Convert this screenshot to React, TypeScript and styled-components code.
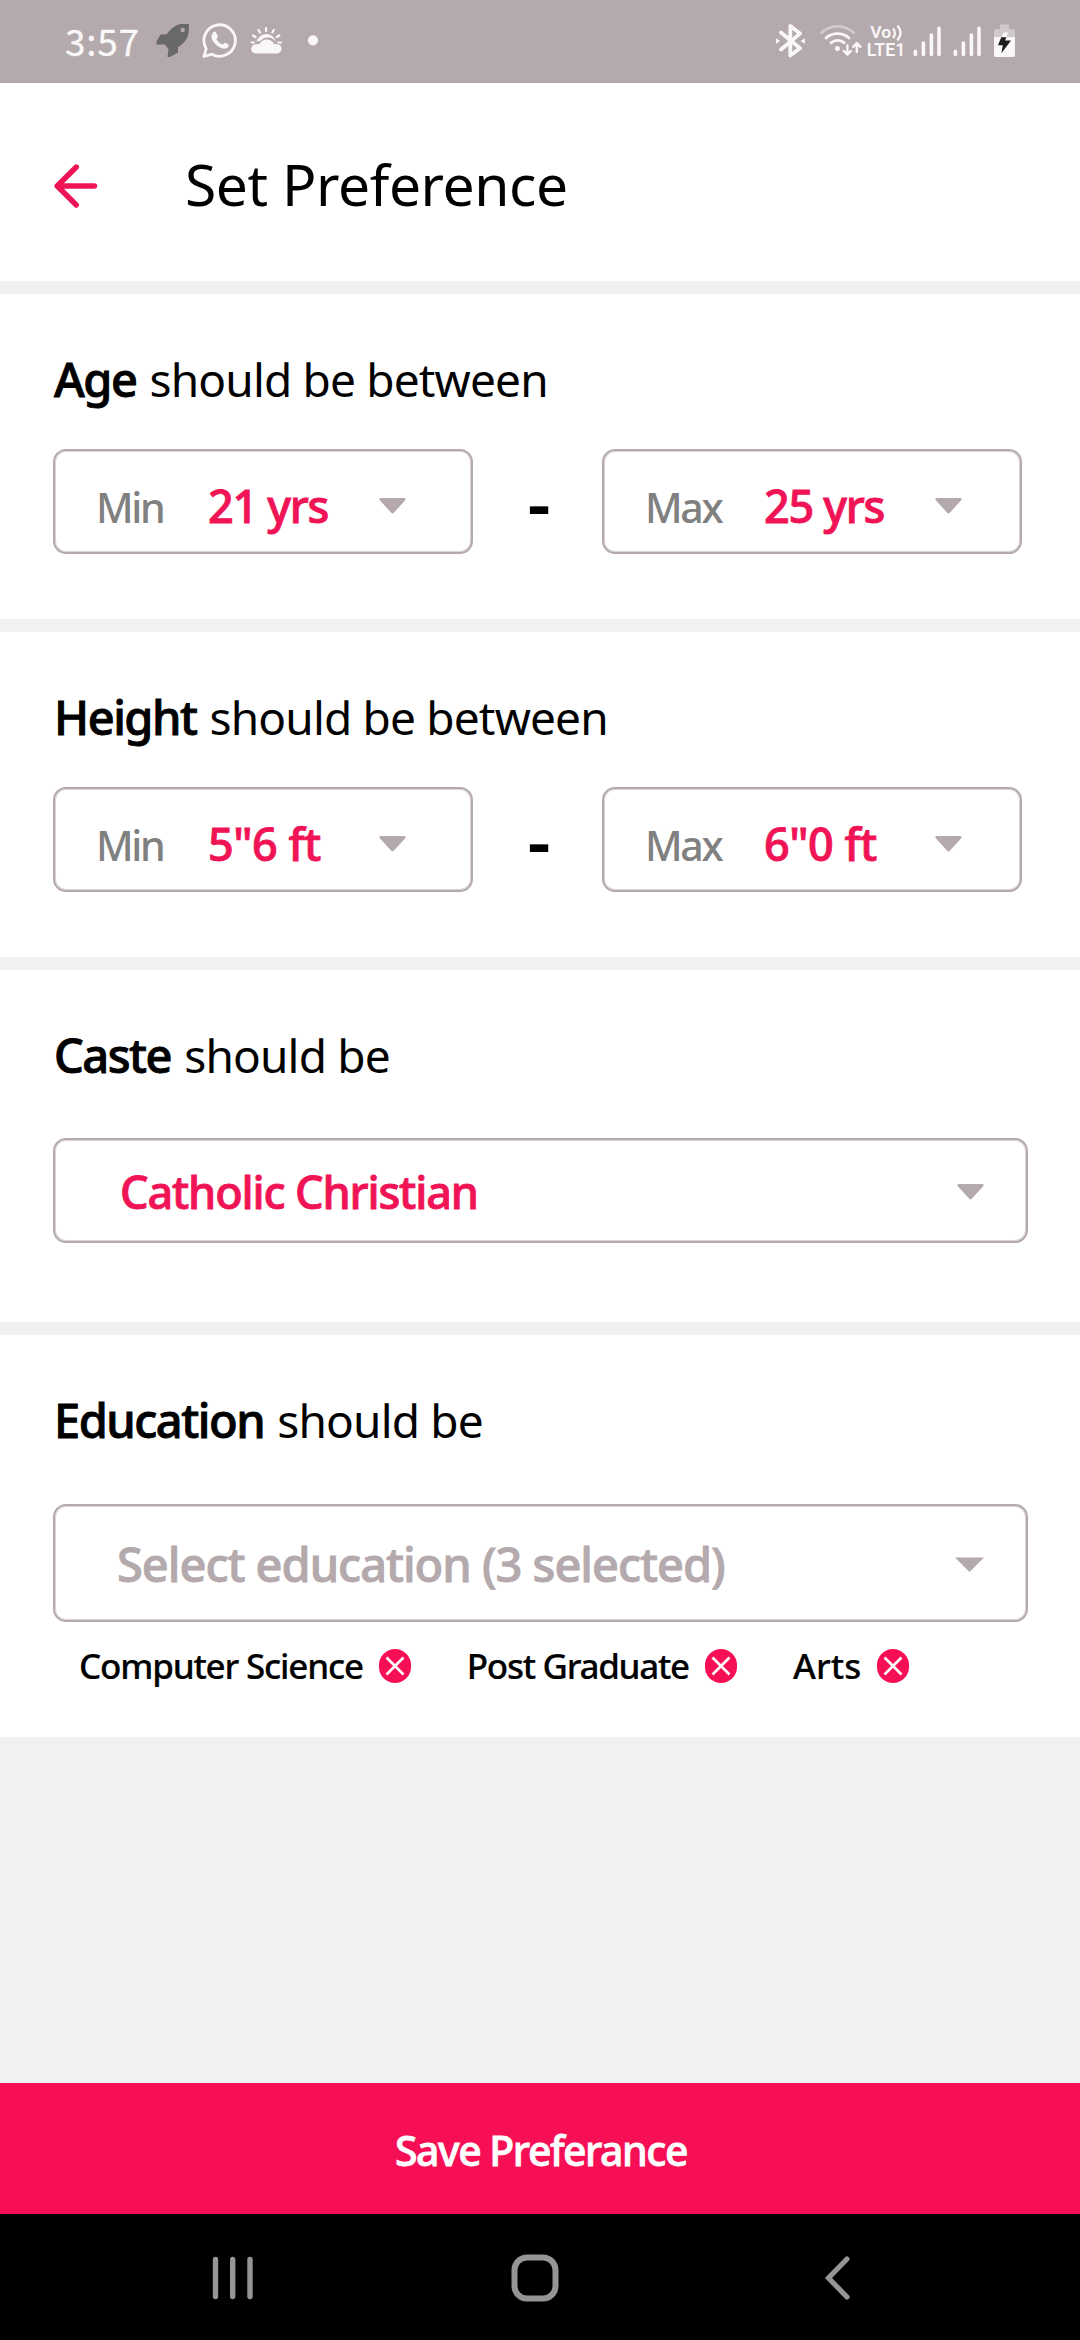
import React from "react";
import styled, { createGlobalStyle } from "styled-components";

const PINK = "#f01456";
const BRAND = "#f70f55";
const MUTED = "#b4a9ac";
const ICON = "#f9f7f8";

const GlobalStyle = createGlobalStyle`
  body { margin: 0; background: #f1f1f1; }
  * { box-sizing: border-box; }
`;

const Screen = styled.div`
  width: 1080px;
  height: 2340px;
  display: flex;
  flex-direction: column;
  background: #f1f1f1;
  color: #000;
  font-family: "Noto Sans", sans-serif;
  overflow: hidden;
`;

/* ---------- status bar ---------- */

const StatusBar = styled.div`
  height: 83px;
  flex: none;
  display: flex;
  align-items: center;
  justify-content: space-between;
  padding: 0 64px 2px 65px;
  background: ${MUTED};
`;

const StatusGroup = styled.div<{ $gap: number }>`
  display: flex;
  align-items: center;
  gap: ${(p) => p.$gap}px;
`;

const Clock = styled.span`
  width: 79px;
  padding-bottom: 2px;
  font-family: "Noto Sans CJK JP", "Noto Sans", sans-serif;
  font-size: 37px;
  line-height: 78px;
  letter-spacing: 0.7px;
  white-space: nowrap;
  color: ${ICON};
  -webkit-text-stroke: 0.3px currentColor;
`;

const Glyph = styled.svg<{ $before?: number }>`
  display: block;
  flex: none;
  margin-left: ${(p) => p.$before ?? 0}px;
`;

/* ---------- header ---------- */

const Header = styled.header`
  height: 198px;
  flex: none;
  display: flex;
  align-items: center;
  padding: 4px 0 0 53px;
  background: #fff;
`;

const BackButton = styled.button`
  display: flex;
  width: 132px;
  margin-top: 4px;
  padding: 0;
  border: 0;
  background: none;
`;

const Title = styled.h1`
  margin: 0;
  font-size: 57px;
  font-weight: 400;
  line-height: 80px;
  letter-spacing: -0.45px;
`;

/* ---------- sections ---------- */

const Section = styled.section<{ $height: number }>`
  height: ${(p) => p.$height}px;
  flex: none;
  margin-top: 13px;
  padding: 55px 52px 0 53px;
  background: #fff;
`;

const Label = styled.h2<{ $gap: number }>`
  margin: 0 0 ${(p) => p.$gap}px;
  padding-left: 1px;
  font-size: 46px;
  font-weight: 400;
  line-height: 60px;
  letter-spacing: -0.83px;
  white-space: nowrap;
`;

const Strong = styled.strong`
  margin-right: 2px;
  font-size: 47px;
  font-weight: 500;
  line-height: 1;
  letter-spacing: -1.5px;
  -webkit-text-stroke: 0.9px currentColor;
`;

const RangeRow = styled.div`
  display: flex;
  align-items: center;
`;

const Dash = styled.span`
  width: 129px;
  height: 105px;
  padding-left: 3px;
  text-align: center;
  font-size: 72px;
  font-weight: 600;
  line-height: 106px;
`;

const Select = styled.div<{ $width: number; $height: number; $pad: string; $spread?: boolean }>`
  width: ${(p) => p.$width}px;
  height: ${(p) => p.$height}px;
  flex: none;
  display: flex;
  align-items: center;
  justify-content: ${(p) => (p.$spread ? "space-between" : "flex-start")};
  padding: ${(p) => p.$pad};
  border: 2px solid ${MUTED};
  border-radius: 13px;
  box-shadow: inset 0 0 0 1px rgba(180, 169, 172, 0.5);
  background: #fff;
`;

const Bound = styled.span<{ $width: number }>`
  width: ${(p) => p.$width}px;
  padding-top: 2px;
  font-size: 41px;
  font-weight: 500;
  line-height: 60px;
  letter-spacing: -2.3px;
  color: #808080;
`;

const Value = styled.span<{ $width?: number; $size: number; $color?: string; $tracking: number }>`
  width: ${(p) => (p.$width ? `${p.$width}px` : "auto")};
  font-size: ${(p) => p.$size}px;
  font-weight: 500;
  line-height: 60px;
  letter-spacing: ${(p) => p.$tracking}px;
  white-space: nowrap;
  color: ${(p) => p.$color ?? PINK};
  -webkit-text-stroke: 0.9px currentColor;
`;

const Chips = styled.div`
  display: flex;
  align-items: center;
  gap: 56px;
  height: 44px;
  margin-top: 22px;
  padding-left: 26px;
`;

const Chip = styled.span<{ $tracking: number }>`
  display: flex;
  align-items: center;
  gap: 16px;
  font-size: 35px;
  font-weight: 500;
  line-height: 44px;
  letter-spacing: ${(p) => p.$tracking}px;
  white-space: nowrap;
  -webkit-text-stroke: 0.2px currentColor;
`;

/* ---------- bottom ---------- */

const SaveButton = styled.button`
  height: 131px;
  flex: none;
  margin-top: auto;
  padding: 3px 0 0 2px;
  border: 0;
  background: ${BRAND};
  color: #fff;
  font-family: inherit;
  font-size: 41px;
  font-weight: 500;
  letter-spacing: -1.5px;
  -webkit-text-stroke: 0.8px currentColor;
`;

const NavBar = styled.nav`
  height: 126px;
  flex: none;
  display: grid;
  grid-template-columns: repeat(3, 302px);
  align-items: center;
  justify-items: center;
  padding: 1px 0 0 82px;
  background: #000;
`;

/* ---------- icons ---------- */

const RoundCaret = () => (
  <Glyph width="27" height="18" viewBox="0 0 27 18">
    <path d="M1.6 1H25.4Q27.4 1.4 26.4 3L15 15.6Q13.5 17.3 12 15.6L0.6 3Q-0.4 1.4 1.6 1Z" fill={MUTED} />
  </Glyph>
);

const SharpCaret = () => (
  <Glyph width="29" height="15" viewBox="0 0 29 15">
    <path d="M0 0.4H29L14.5 15Z" fill={MUTED} />
  </Glyph>
);

const RemoveIcon = () => (
  <Glyph width="32" height="34" viewBox="0 0 32 34">
    <rect width="32" height="34" rx="16" fill={BRAND} />
    <path d="M7.5 8.5L24.5 25.5M24.5 8.5L7.5 25.5" stroke="#fff" strokeWidth="2.6" />
  </Glyph>
);

const Rocket = () => (
  <Glyph width="34" height="34" viewBox="156 24 34 34">
    <path
      d="M189 24L188.6 33Q187.5 41 178 47.5V52.5L170 57H167.5L168.5 49L164.5 44.5H156.5V41.5L160.5 34.5H166.5Q172 26.5 180 24Z"
      fill="#696969"
    />
    <circle cx="182.7" cy="30" r="2.2" fill={MUTED} />
  </Glyph>
);

const WhatsApp = () => (
  <Glyph width="36" height="36" viewBox="202 23 36 36">
    <path d="M204 56.5L206.2 48.6A15.7 15.7 0 1 1 212 54.2Z" fill="none" stroke={ICON} strokeWidth="2.8" strokeLinejoin="round" />
    <path
      d="M213.6 33.2Q215 31.8 216.2 32.8L218.4 37Q218.6 38.2 216.8 40Q219.3 44 223.2 45.6Q225 43.2 226.2 43.6L229.4 45.8Q229 49.6 224.4 49.6Q217.8 48.6 213 41.4Q210.6 36.4 213.6 33.2Z"
      fill={ICON}
      transform="translate(-.5 -.8)"
    />
  </Glyph>
);

const Weather = () => (
  <Glyph width="34" height="34" viewBox="250 24 34 34">
    <g stroke={ICON} strokeWidth="2.2" strokeLinecap="round">
      <path d="M266 28V31M258.5 30L260 32.5M273.8 30L272.3 32.5M253 35.5L255.5 37M279.3 35.5L276.8 37M251.6 42.5H254M278.4 42.5H281" />
    </g>
    <path d="M256.6 41.8A9.8 9.8 0 0 1 275.8 41.8A9.6 9.6 0 0 0 260.4 41A8 8 0 0 0 256.6 41.8Z" fill={ICON} />
    <path d="M255.6 53.4A4.6 4.6 0 0 1 255.8 44.2L259.6 44A8 8 0 0 1 274 44L277 44.2A4.6 4.6 0 0 1 277 53.4Z" fill={ICON} />
  </Glyph>
);

const Dot = () => (
  <Glyph width="34" height="34" viewBox="296 24 34 34">
    <circle cx="313" cy="40.3" r="5.1" fill={ICON} />
  </Glyph>
);

const Bluetooth = () => (
  <Glyph width="30" height="34" viewBox="775 24 30 34">
    <path d="M781 32.5L800 48.3L790.3 55.5V26L800 33.6L781 49.5" fill="none" stroke={ICON} strokeWidth="3.8" strokeLinejoin="round" strokeLinecap="round" />
    <path d="M776 38.2L780.3 41L776 43.8ZM805 38.2L800.5 41L805 43.8Z" fill={ICON} />
  </Glyph>
);

const Wifi = () => (
  <Glyph $before={15} width="42" height="34" viewBox="820 24 42 34">
    <g fill="none" strokeWidth="2.8" strokeLinecap="round">
      <path d="M821.5 32.8A23.5 23.5 0 0 1 853.6 32.8" stroke="#d3cbcd" />
      <path d="M826 38A17.5 17.5 0 0 1 849 38" stroke={ICON} />
      <path d="M831 42.8A10.5 10.5 0 0 1 844.2 42.6" stroke={ICON} />
    </g>
    <circle cx="837.4" cy="48.4" r="2.5" fill={ICON} />
    <path d="M847.4 45.5V53.5M843.8 51L847.4 54.6L851 51M856.8 52V44.5M853.2 46.8L856.8 43.2L860.4 46.8" fill="none" stroke={ICON} strokeWidth="2.4" strokeLinecap="round" strokeLinejoin="round" />
  </Glyph>
);

const VoLte = () => (
  <Glyph $before={2} width="44" height="44" viewBox="864 19 44 44">
    <g fill={ICON} fontFamily="Roboto, sans-serif" fontWeight="600">
      <text x="870.3" y="37.8" fontSize="17" textLength="21" lengthAdjust="spacingAndGlyphs">Vo</text>
      <text x="866.8" y="55.6" fontSize="18" textLength="38.6" lengthAdjust="spacingAndGlyphs">LTE1</text>
    </g>
    <path d="M893 28.5Q896.8 32.8 893 38M897.4 25.6Q903.6 32.8 897.4 40.4" fill="none" stroke={ICON} strokeWidth="2.3" />
  </Glyph>
);

const Signal = ({ before }: { before: number }) => (
  <Glyph $before={before} width="28" height="34" viewBox="913 24 28 34">
    <path d="M915.4 51.3V54.4M923.4 43V54.4M931.4 35V54.4M939 28.2V54.4" stroke={ICON} strokeWidth="3.6" strokeLinecap="round" />
  </Glyph>
);

const Battery = () => (
  <Glyph $before={13} width="22" height="34" viewBox="994 24 22 34">
    <path d="M1000 24.5H1009V29H1013Q1015 29 1015 31V37H994V31Q994 29 996 29H1000Z" fill="#d0c8ca" />
    <path d="M994 37H1015V55Q1015 57 1013 57H996Q994 57 994 55Z" fill={ICON} />
    <path d="M1003.6 32.5H1008.4L1006 37.4H1001.3Z" fill={ICON} />
    <path d="M1001.3 37.2H1006.3L1005.2 40.6H1011L1001.4 53.2L1002.8 45.2H998Z" fill="#1d1d1d" />
  </Glyph>
);

const BackArrow = () => (
  <Glyph width="46" height="46" viewBox="53 163 46 46">
    <path d="M76.3 167L57.2 186L76.3 205M57.2 186H94.5" fill="none" stroke={PINK} strokeWidth="5.4" strokeLinecap="round" strokeLinejoin="round" />
  </Glyph>
);

const Recents = () => (
  <Glyph width="46" height="46" viewBox="0 0 46 46">
    <path d="M5.5 4.5V41.5M22.7 4.5V41.5M40 4.5V41.5" stroke="#959595" strokeWidth="5.4" strokeLinecap="round" />
  </Glyph>
);

const Home = () => (
  <Glyph width="48" height="48" viewBox="0 0 48 48">
    <rect x="3.5" y="3.5" width="41" height="41" rx="12.5" fill="none" stroke="#959595" strokeWidth="6" />
  </Glyph>
);

const NavBack = () => (
  <Glyph width="28" height="46" viewBox="0 0 28 46">
    <path d="M24 4L5.5 23L24 42" fill="none" stroke="#959595" strokeWidth="5.2" strokeLinecap="round" />
  </Glyph>
);

/* ---------- composed parts ---------- */

const BoundSelect = ({ bound, value, tracking }: { bound: "Min" | "Max"; value: string; tracking: number }) => (
  <Select $width={420} $height={105} $pad="8px 0 0 41px">
    <Bound $width={bound === "Min" ? 112 : 119}>{bound}</Bound>
    <Value $width={171} $size={45} $tracking={tracking}>{value}</Value>
    <RoundCaret />
  </Select>
);

type RangeProps = { name: string; min: string; max: string; tracking: number };

const Range = ({ name, min, max, tracking }: RangeProps) => (
  <Section $height={325}>
    <Label $gap={40}>
      <Strong>{name}</Strong> should be between
    </Label>
    <RangeRow>
      <BoundSelect bound="Min" value={min} tracking={tracking} />
      <Dash>-</Dash>
      <BoundSelect bound="Max" value={max} tracking={tracking} />
    </RangeRow>
  </Section>
);

const education = [
  { name: "Computer Science", tracking: -1.2 },
  { name: "Post Graduate", tracking: -1.3 },
  { name: "Arts", tracking: 0.1 },
];

export default function App() {
  return (
    <Screen>
      <GlobalStyle />
      <StatusBar>
        <StatusGroup $gap={12}>
          <Clock>3:57</Clock>
          <Rocket />
          <WhatsApp />
          <Weather />
          <Dot />
        </StatusGroup>
        <StatusGroup $gap={0}>
          <Bluetooth />
          <Wifi />
          <VoLte />
          <Signal before={5} />
          <Signal before={12} />
          <Battery />
        </StatusGroup>
      </StatusBar>

      <Header>
        <BackButton aria-label="Back">
          <BackArrow />
        </BackButton>
        <Title>Set Preference</Title>
      </Header>

      <Range name="Age" min="21 yrs" max="25 yrs" tracking={-1.3} />
      <Range name="Height" min={'5"6 ft'} max={'6"0 ft'} tracking={-0.5} />

      <Section $height={352}>
        <Label $gap={53}>
          <Strong>Caste</Strong> should be
        </Label>
        <Select $width={975} $height={105} $pad="3px 42px 0 65px" $spread>
          <Value $size={45} $tracking={-1.15}>Catholic Christian</Value>
          <RoundCaret />
        </Select>
      </Section>

      <Section $height={402}>
        <Label $gap={54}>
          <Strong>Education</Strong> should be
        </Label>
        <Select $width={975} $height={118} $pad="2px 42px 0 62px" $spread>
          <Value $size={47} $color={MUTED} $tracking={-1.03}>Select education (3 selected)</Value>
          <SharpCaret />
        </Select>
        <Chips>
          {education.map(({ name, tracking }) => (
            <Chip key={name} $tracking={tracking}>
              {name}
              <RemoveIcon />
            </Chip>
          ))}
        </Chips>
      </Section>

      <SaveButton>Save Preferance</SaveButton>
      <NavBar>
        <Recents />
        <Home />
        <NavBack />
      </NavBar>
    </Screen>
  );
}
